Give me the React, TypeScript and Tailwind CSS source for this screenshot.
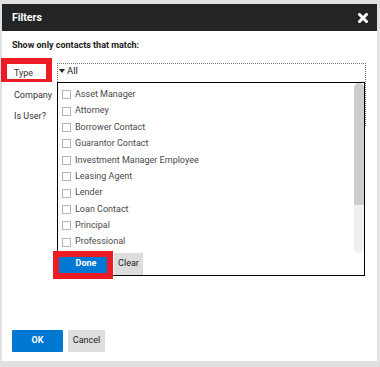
import React from 'react'

const TYPES = [
  'Asset Manager',
  'Attorney',
  'Borrower Contact',
  'Guarantor Contact',
  'Investment Manager Employee',
  'Leasing Agent',
  'Lender',
  'Loan Contact',
  'Principal',
  'Professional',
]

function CloseIcon() {
  return (
    <svg width="10" height="10" viewBox="0 0 10 10">
      <path d="M1.5 1.5 L8.5 8.5 M8.5 1.5 L1.5 8.5" stroke="#fff" strokeWidth="3" strokeLinecap="square" />
    </svg>
  )
}

function TypeDropdown() {
  return (
    <div className="absolute left-[55px] top-[78px] w-[308px] h-[194px] border border-black bg-white flex flex-col">
      <div className="relative flex-1">
        <ul className="pt-[3.5px]">
          {TYPES.map(t => (
            <li key={t} className="h-[16.4px] flex items-center pl-[4px] gap-[4px] text-[9px] text-[#4a4a4a]">
              <span className="w-[9px] h-[9px] border border-[#b5b5b5] bg-white shrink-0" />
              <span>{t}</span>
            </li>
          ))}
        </ul>
        {/* scrollbar */}
        <div className="absolute right-0 top-0 w-[10px] h-[170px] flex flex-col">
          <div className="h-[122px] bg-[#cdcdcd] rounded-t-[5px]" />
          <div className="flex-1 bg-[#f0f0f0] rounded-b-[5px]" />
        </div>
      </div>
      <div className="h-[23px] flex items-end gap-px pl-px">
        <button className="w-[54px] h-[22px] bg-[#0078d4] text-white text-[9px] font-bold">Done</button>
        <button className="w-[29px] h-[22px] bg-[#dddddd] text-[#222] text-[9px]">Clear</button>
      </div>
    </div>
  )
}

export default function App() {
  return (
    <div className="w-[380px] h-[367px] bg-[#e1e1e1] pt-[4px] pl-[2px] font-['Roboto',sans-serif]">
      <div className="relative w-[375px] h-[357px] bg-white flex flex-col">
        <div className="h-[27px] bg-[#222426] flex items-center justify-between pl-[10px] pr-[9px]">
          <span className="text-white text-[10.5px] font-bold">Filters</span>
          <CloseIcon />
        </div>

        <div className="flex-1 flex flex-col px-[10px] pt-[8px]">
          <p className="text-[9px] font-bold text-[#222] h-[12px] leading-[12px]">Show only contacts that match:</p>

          <div className="mt-[12px] flex">
            <div className="w-[45px] flex flex-col text-[9px] text-[#333] pl-[2px] pt-[4px] gap-[8.5px]">
              <span className="h-[13px] leading-[13px]">Type</span>
              <span className="h-[13px] leading-[13px]">Company</span>
              <span className="h-[13px] leading-[13px]">Is User?</span>
            </div>
            <div className="w-[309px] h-[63px] border border-dotted border-[#777] pl-[1px]">
              <div className="flex items-center gap-[2px] h-[14px] text-[9.5px] text-[#222]">
                <svg width="6" height="4" viewBox="0 0 6 4"><path d="M0 0 L6 0 L3 4 Z" fill="#222" /></svg>
                <span>All</span>
              </div>
            </div>
          </div>

          <div className="flex-1" />

          <div className="flex gap-[5px] pb-[9px]">
            <button className="w-[51px] h-[22px] bg-[#0078d4] text-white text-[9px] font-bold rounded-[1px]">OK</button>
            <button className="w-[37px] h-[22px] bg-[#dddddd] text-[#222] text-[9px] rounded-[1px]">Cancel</button>
          </div>
        </div>

        <TypeDropdown />

        {/* red annotation boxes */}
        <div className="absolute left-[-1px] top-[54px] w-[51px] h-[24px] border-[6px] border-b-[3px] border-[#ed1c24]" />
        <div className="absolute left-[51px] top-[247px] w-[60px] h-[28px] border-[6px] border-[#ed1c24]" />
      </div>
    </div>
  )
}
